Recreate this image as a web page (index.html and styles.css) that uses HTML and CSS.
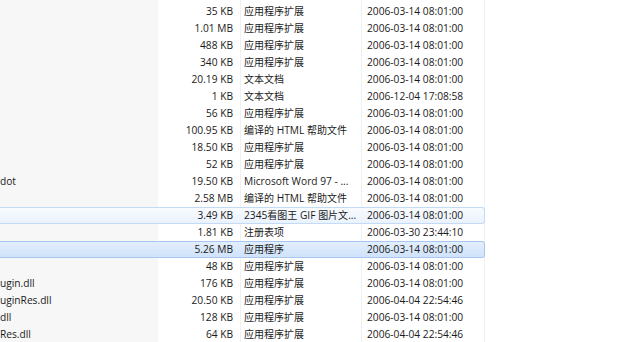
FILE: index.html
```html
<!DOCTYPE html>
<html>
<head>
    <title>文件列表</title>
    <link rel="stylesheet" href="styles.css">
</head>
<body>
    <div class="list">
        <div class="row"><span class="name"></span><span class="size">35 KB</span><span class="type"><span class="cn">应用程序扩展</span></span><span class="date">2006-03-14 08:01:00</span></div>
        <div class="row"><span class="name"></span><span class="size">1.01 MB</span><span class="type"><span class="cn">应用程序扩展</span></span><span class="date">2006-03-14 08:01:00</span></div>
        <div class="row"><span class="name"></span><span class="size">488 KB</span><span class="type"><span class="cn">应用程序扩展</span></span><span class="date">2006-03-14 08:01:00</span></div>
        <div class="row"><span class="name"></span><span class="size">340 KB</span><span class="type"><span class="cn">应用程序扩展</span></span><span class="date">2006-03-14 08:01:00</span></div>
        <div class="row"><span class="name"></span><span class="size">20.19 KB</span><span class="type"><span class="cn">文本文档</span></span><span class="date">2006-03-14 08:01:00</span></div>
        <div class="row"><span class="name"></span><span class="size">1 KB</span><span class="type"><span class="cn">文本文档</span></span><span class="date">2006-12-04 17:08:58</span></div>
        <div class="row"><span class="name"></span><span class="size">56 KB</span><span class="type"><span class="cn">应用程序扩展</span></span><span class="date">2006-03-14 08:01:00</span></div>
        <div class="row"><span class="name"></span><span class="size">100.95 KB</span><span class="type"><span class="cn">编译的</span> HTML <span class="cn">帮助文件</span></span><span class="date">2006-03-14 08:01:00</span></div>
        <div class="row"><span class="name"></span><span class="size">18.50 KB</span><span class="type"><span class="cn">应用程序扩展</span></span><span class="date">2006-03-14 08:01:00</span></div>
        <div class="row"><span class="name"></span><span class="size">52 KB</span><span class="type"><span class="cn">应用程序扩展</span></span><span class="date">2006-03-14 08:01:00</span></div>
        <div class="row"><span class="name">dot</span><span class="size">19.50 KB</span><span class="type">Microsoft Word 97 - ...</span><span class="date">2006-03-14 08:01:00</span></div>
        <div class="row"><span class="name"></span><span class="size">2.58 MB</span><span class="type"><span class="cn">编译的</span> HTML <span class="cn">帮助文件</span></span><span class="date">2006-03-14 08:01:00</span></div>
        <div class="row hover"><span class="name"></span><span class="size">3.49 KB</span><span class="type">2345<span class="cn">看图王</span> GIF <span class="cn">图片文</span>...</span><span class="date">2006-03-14 08:01:00</span></div>
        <div class="row"><span class="name"></span><span class="size">1.81 KB</span><span class="type"><span class="cn">注册表项</span></span><span class="date">2006-03-30 23:44:10</span></div>
        <div class="row selected"><span class="name"></span><span class="size">5.26 MB</span><span class="type"><span class="cn">应用程序</span></span><span class="date">2006-03-14 08:01:00</span></div>
        <div class="row"><span class="name"></span><span class="size">48 KB</span><span class="type"><span class="cn">应用程序扩展</span></span><span class="date">2006-03-14 08:01:00</span></div>
        <div class="row"><span class="name">ugin.dll</span><span class="size">176 KB</span><span class="type"><span class="cn">应用程序扩展</span></span><span class="date">2006-03-14 08:01:00</span></div>
        <div class="row"><span class="name">uginRes.dll</span><span class="size">20.50 KB</span><span class="type"><span class="cn">应用程序扩展</span></span><span class="date">2006-04-04 22:54:46</span></div>
        <div class="row"><span class="name">dll</span><span class="size">128 KB</span><span class="type"><span class="cn">应用程序扩展</span></span><span class="date">2006-03-14 08:01:00</span></div>
        <div class="row"><span class="name">Res.dll</span><span class="size">64 KB</span><span class="type"><span class="cn">应用程序扩展</span></span><span class="date">2006-04-04 22:54:46</span></div>
    </div>
</body>
</html>
```

FILE: styles.css
```css
body {
    margin: 0;
    background-color: #fff;
    font-family: "Open Sans", "Noto Sans CJK SC", sans-serif;
    font-size: 10.2px;
    color: #1a1a1a;
}

.list {
    width: 485px;
    height: 342px;
    padding-top: 3px;
    box-sizing: border-box;
    overflow: hidden;
    /* colonne triée + séparateurs */
    background:
        linear-gradient(to right, transparent 240px, #f0f1f3 240px, #f0f1f3 241px, transparent 241px),
        linear-gradient(to right, transparent 361px, #f0f1f3 361px, #f0f1f3 362px, transparent 362px),
        linear-gradient(to right, transparent 484px, #f0f1f3 484px),
        linear-gradient(to right, #f7f7f7 158px, #fff 158px);
}

.row {
    display: grid;
    grid-template-columns: 158px 82px 121px 123px;
    height: 17px;
    line-height: 16px;
    box-sizing: border-box;
    white-space: nowrap;
}

.name {
    overflow: hidden;
}

.size {
    text-align: right;
    padding-right: 7px;
}

.type {
    padding-left: 4px;
    overflow: hidden;
}

.date {
    padding-left: 6px;
}

.cn {
    font-family: "Noto Sans CJK SC", sans-serif;
    font-size: 10px;
}

.hover {
    border: 1px solid #c4dbf7;
    border-left: none;
    border-radius: 0 3px 3px 0;
    background: linear-gradient(#f8fbfe, #eaf2fd);
}

.selected {
    border: 1px solid #a9c7ee;
    border-left: none;
    border-radius: 0 3px 3px 0;
    background: linear-gradient(#e2eefc, #d0e3fb);
}

.hover span, .selected span {
    margin-top: -1px;
}
```
